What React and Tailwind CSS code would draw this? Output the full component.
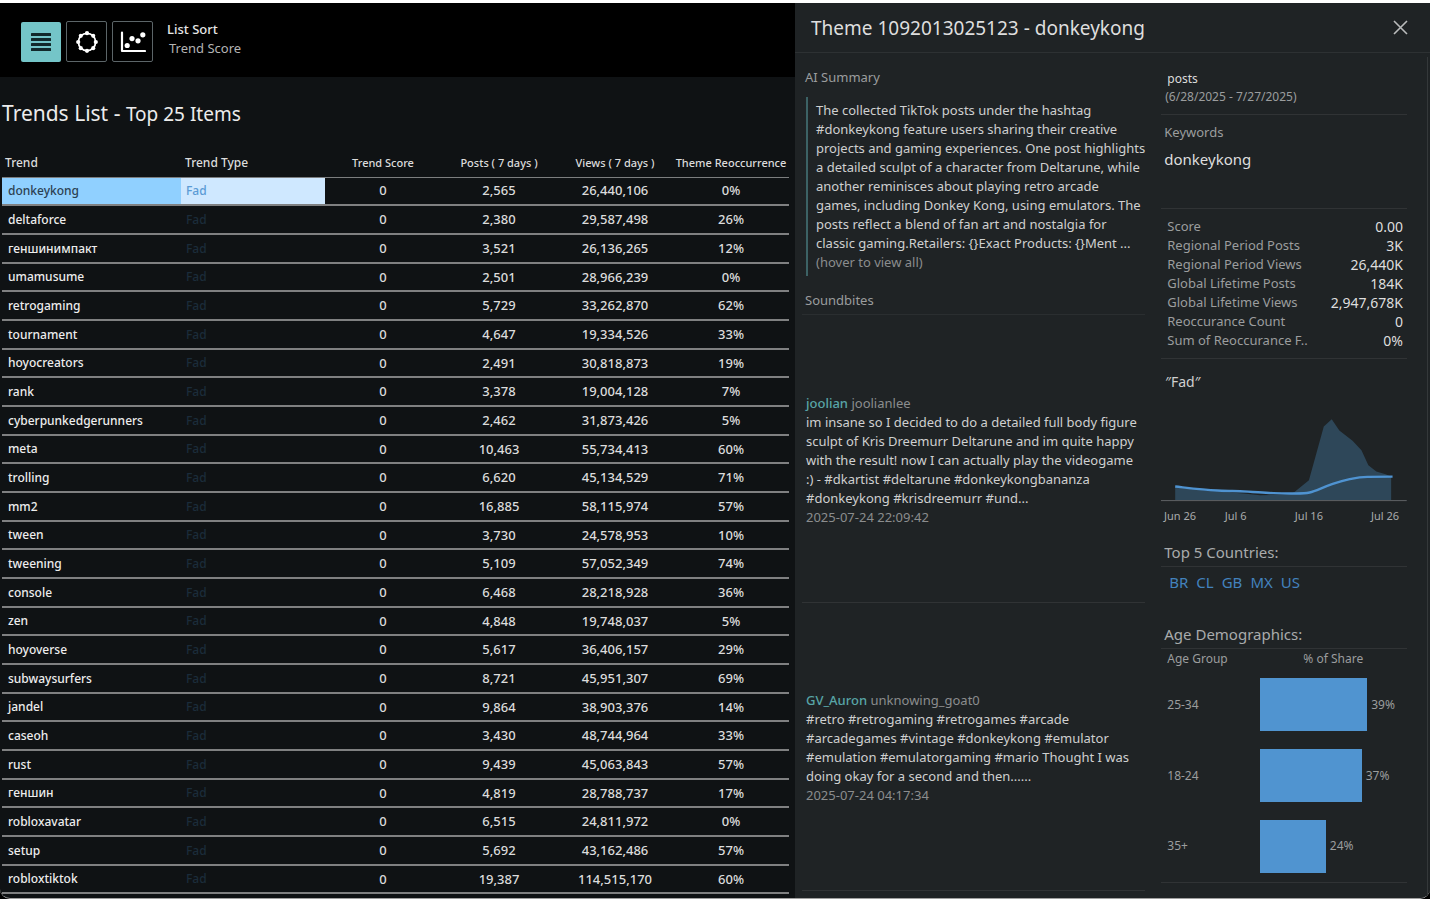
const trends = [
  ["donkeykong", "2,565", "26,440,106", "0%"],
  ["deltaforce", "2,380", "29,587,498", "26%"],
  ["геншинимпакт", "3,521", "26,136,265", "12%"],
  ["umamusume", "2,501", "28,966,239", "0%"],
  ["retrogaming", "5,729", "33,262,870", "62%"],
  ["tournament", "4,647", "19,334,526", "33%"],
  ["hoyocreators", "2,491", "30,818,873", "19%"],
  ["rank", "3,378", "19,004,128", "7%"],
  ["cyberpunkedgerunners", "2,462", "31,873,426", "5%"],
  ["meta", "10,463", "55,734,413", "60%"],
  ["trolling", "6,620", "45,134,529", "71%"],
  ["mm2", "16,885", "58,115,974", "57%"],
  ["tween", "3,730", "24,578,953", "10%"],
  ["tweening", "5,109", "57,052,349", "74%"],
  ["console", "6,468", "28,218,928", "36%"],
  ["zen", "4,848", "19,748,037", "5%"],
  ["hoyoverse", "5,617", "36,406,157", "29%"],
  ["subwaysurfers", "8,721", "45,951,307", "69%"],
  ["jandel", "9,864", "38,903,376", "14%"],
  ["caseoh", "3,430", "48,744,964", "33%"],
  ["rust", "9,439", "45,063,843", "57%"],
  ["геншин", "4,819", "28,788,737", "17%"],
  ["robloxavatar", "6,515", "24,811,972", "0%"],
  ["setup", "5,692", "43,162,486", "57%"],
  ["robloxtiktok", "19,387", "114,515,170", "60%"],
];

const stats = [
  ["Score", "0.00"],
  ["Regional Period Posts", "3K"],
  ["Regional Period Views", "26,440K"],
  ["Global Lifetime Posts", "184K"],
  ["Global Lifetime Views", "2,947,678K"],
  ["Reoccurance Count", "0"],
  ["Sum of Reoccurance F..", "0%"],
];

const posts = [
  {
    name: "joolian",
    handle: "joolianlee",
    lines: [
      "im insane so I decided to do a detailed full body figure",
      "sculpt of Kris Dreemurr Deltarune and im quite happy",
      "with the result! now I can actually play the videogame",
      ":) - #dkartist #deltarune #donkeykongbananza",
      "#donkeykong #krisdreemurr #und...",
    ],
    time: "2025-07-24 22:09:42",
  },
  {
    name: "GV_Auron",
    handle: "unknowing_goat0",
    lines: [
      "#retro #retrogaming #retrogames #arcade",
      "#arcadegames #vintage #donkeykong #emulator",
      "#emulation #emulatorgaming #mario Thought I was",
      "doing okay for a second and then......",
    ],
    time: "2025-07-24 04:17:34",
  },
];

const summary = [
  "The collected TikTok posts under the hashtag",
  "#donkeykong feature users sharing their creative",
  "projects and gaming experiences. One post highlights",
  "a detailed sculpt of a character from Deltarune, while",
  "another reminisces about playing retro arcade",
  "games, including Donkey Kong, using emulators. The",
  "posts reflect a blend of fan art and nostalgia for",
  "classic gaming.Retailers: {}Exact Products: {}Ment ...",
];

const ages = [
  ["25-34", 39],
  ["18-24", 37],
  ["35+", 24],
];

const MAX_BAR = 73;

function ListIcon() {
  return (
    <svg width="20" height="18" viewBox="0 0 20 18" fill="#12292b" aria-hidden="true">
      <rect width="20" height="3" rx="0.5" />
      <rect y="5" width="20" height="3" rx="0.5" />
      <rect y="10" width="20" height="3" rx="0.5" />
      <rect y="15" width="20" height="3" rx="0.5" />
    </svg>
  );
}

function RingIcon() {
  const dots = [[11, 2.2], [17.2, 4.8], [19.8, 11], [17.2, 17.2], [11, 19.8], [4.8, 17.2], [2.2, 11], [4.8, 4.8]];
  return (
    <svg width="22" height="22" viewBox="0 0 22 22" aria-hidden="true">
      <circle cx="11" cy="11" r="8.6" fill="none" stroke="#fff" strokeWidth="1.8" />
      {dots.map(([x, y]) => (
        <circle key={`${x}-${y}`} cx={x} cy={y} r="2.1" fill="#fff" />
      ))}
    </svg>
  );
}

function ScatterIcon() {
  return (
    <svg width="26" height="22" viewBox="0 0 26 22" fill="#fff" aria-hidden="true">
      <path d="M2 1.5V20H25" fill="none" stroke="#fff" strokeWidth="2.2" strokeLinecap="round" strokeLinejoin="round" />
      <circle cx="7.2" cy="14.5" r="2.6" />
      <circle cx="12" cy="7.6" r="2.6" />
      <circle cx="18" cy="9.8" r="2.6" />
      <circle cx="22.8" cy="3.8" r="2.6" />
    </svg>
  );
}

function Toolbar() {
  return (
    <header className="flex h-[74px] items-start bg-black pt-[18px] pl-[21px]">
      <div className="flex items-center gap-[5px]">
        <button type="button" aria-label="List view" className="flex size-10 items-center justify-center rounded-xs bg-[#74c5c8]">
          <ListIcon />
        </button>
        <button type="button" aria-label="Network view" className="flex size-[41px] items-center justify-center rounded-xs border border-[#5c6568]">
          <RingIcon />
        </button>
        <button type="button" aria-label="Scatter view" className="flex size-[41px] items-center justify-center rounded-xs border border-[#5c6568]">
          <ScatterIcon />
        </button>
      </div>
      <div className="-mt-px ml-[14px] text-[13px] leading-[19px]">
        <p className="font-medium text-[#e6e6e6]">List Sort</p>
        <p className="pl-0.5 text-[#b4b4b4]">Trend Score</p>
      </div>
    </header>
  );
}

function TrendsTable() {
  return (
    <table className="mb-1 ml-[2px] w-[calc(100%-8px)] table-fixed border-collapse text-[13px] leading-4 font-medium text-[#dcdcdc]">
      <colgroup>
        <col className="w-[179px]" />
        <col className="w-[144px]" />
        <col />
        <col />
        <col />
        <col />
      </colgroup>
      <thead>
        <tr className="h-[30px] border-b border-[#7c7e7f] text-[11px]">
          <th scope="col" className="pt-0.5 pl-[3px] text-left text-[12px] font-medium">Trend</th>
          <th scope="col" className="pt-0.5 pl-1 text-left text-[12px] font-medium">Trend Type</th>
          <th scope="col" className="pt-0.5 font-medium">Trend Score</th>
          <th scope="col" className="pt-0.5 font-medium">Posts ( 7 days )</th>
          <th scope="col" className="pt-0.5 font-medium">Views ( 7 days )</th>
          <th scope="col" className="pt-0.5 font-medium whitespace-nowrap">Theme Reoccurrence</th>
        </tr>
      </thead>
      <tbody>
        {trends.map(([name, count, views, rate], i) => (
          <tr key={name} className={`border-b-2 border-[#7f8081] text-center ${i % 3 === 0 ? "h-7" : "h-[29px]"}`}>
            <td className={`pl-[6px] text-left text-[12px] ${i === 0 ? "bg-[#90d0ff] text-[#2c4152]" : "text-[#ededed]"}`}>{name}</td>
            <td className={`pl-[5px] text-left text-[12px] ${i === 0 ? "bg-[#cfe8ff] text-[#5b9bd5]" : "text-[#1b2c3a]"}`}>Fad</td>
            <td className="pb-px">0</td>
            <td className="pb-px">{count}</td>
            <td className="pb-px">{views}</td>
            <td className="pb-px">{rate}</td>
          </tr>
        ))}
      </tbody>
    </table>
  );
}

function TrendChart() {
  return (
    <figure className="mt-[14px]">
      <svg viewBox="0 0 248 98" className="block w-full" role="img" aria-label="Post volume over time">
        <path
          d="M14.3 96V83.3L56.7 87.3 83.3 89.3 100 91 130 90.3 135 87.5 149.3 76 156.7 49.3 164.3 21.7 172.3 14.3 180 25.7 193.3 36 202.3 45.7 209.3 60.7 217.3 67 226.7 70 232.3 72.3V96Z"
          fill="#2e4759"
        />
        <path d="M0 96.5H248" stroke="#5f6365" strokeWidth="1" />
        <path
          d="M14.3 82.3C28 83.8 42 85.6 56.7 86.3S68 86.7 80 87 102 88.6 113.3 89 127 89.4 133.3 89.3 144 89.4 150 88.3 162 83.6 173.3 79.7 186 75.8 193.3 74.3 203 72.8 210 72.5L233.7 72.3"
          fill="none"
          stroke="#4f93d1"
          strokeWidth="2.4"
        />
      </svg>
      <figcaption className="mt-[6px] grid grid-cols-[38fr_74fr_74fr_62fr] text-center text-[11px] leading-4 text-[#a9abac]">
        <span>Jun 26</span>
        <span>Jul 6</span>
        <span>Jul 16</span>
        <span className="pr-2 text-right">Jul 26</span>
      </figcaption>
    </figure>
  );
}

function Summary() {
  return (
    <div className="pt-[10px] text-[13px] text-[#cfd0d0]">
      <h3 className="leading-5 text-[#9b9d9e]">AI Summary</h3>
      <div className="mt-[10px] ml-px border-l-2 border-[#3c6265] py-1 pl-2 leading-[19px] whitespace-nowrap">
        {summary.map((line) => (
          <p key={line}>{line}</p>
        ))}
        <p className="text-[#8b8d8e]">(hover to view all)</p>
      </div>
      <h3 className="mt-[14px] leading-5 text-[#9b9d9e]">Soundbites</h3>
      <div className="-ml-[3px] mt-1 border-t border-[#2a2e30]">
        {posts.map((post) => (
          <article key={post.name} className="flex h-[288px] flex-col justify-center border-b border-[#303335] pt-[3px] pl-1 leading-[19px] whitespace-nowrap">
            <p className="text-[#8b8d8e]">
              <a href="#profile" className="font-medium text-[#58a5a7]">{post.name}</a> {post.handle}
            </p>
            {post.lines.map((line) => (
              <p key={line}>{line}</p>
            ))}
            <p className="text-[#8b8d8e]">{post.time}</p>
          </article>
        ))}
      </div>
    </div>
  );
}

function Details() {
  return (
    <div className="pt-[13px] text-[13px] leading-[19px] text-[#9b9d9e]">
      <div className="border-b border-[#303335] pb-2 pl-1 text-[12px] leading-[18px]">
        <p className="pl-0.5 text-[#dcdcdc]">posts</p>
        <p>(6/28/2025 - 7/27/2025)</p>
      </div>
      <div className="h-[94px] border-b border-[#303335] pt-2 pl-[3px]">
        <h3>Keywords</h3>
        <p className="mt-2 text-[15px] text-[#dedede]">donkeykong</p>
      </div>
      <dl className="border-b border-[#303335] py-2 pr-1 pl-[6px]">
        {stats.map(([label, value]) => (
          <div key={label} className="flex justify-between">
            <dt>{label}</dt>
            <dd className="text-[14px] text-[#dedede]">{value}</dd>
          </div>
        ))}
      </dl>
      <p className="mt-[13px] pl-1 text-[14px] text-[#cfd0d0]">″Fad″</p>
      <TrendChart />
      <h3 className="mt-[18px] border-b border-[#303335] pb-1 pl-[3px] text-[15px] leading-5 text-[#a9abac]">Top 5 Countries:</h3>
      <ul className="mt-[5px] flex gap-2 pl-2 text-[15px] leading-5 text-[#4382bd]">
        {["BR", "CL", "GB", "MX", "US"].map((code) => (
          <li key={code}>{code}</li>
        ))}
      </ul>
      <h3 className="mt-8 border-b border-[#303335] pb-1 pl-[3px] text-[15px] leading-5 text-[#a9abac]">Age Demographics:</h3>
      <table className="w-full table-fixed border-b border-[#303335] text-[12px] leading-4">
        <thead>
          <tr className="h-5">
            <th scope="col" className="w-2/5 pl-[6px] text-left font-normal">Age Group</th>
            <th scope="col" className="font-normal">% of Share</th>
          </tr>
        </thead>
        <tbody>
          {ages.map(([group, share]) => (
            <tr key={group} className="h-[71px]">
              <td className="pl-[6px]">{group}</td>
              <td>
                <div className="flex items-center gap-1">
                  <div className="h-[53px] bg-[#5094d0]" style={{ width: `${(share / 39) * MAX_BAR}%` }} />
                  <span>{share}%</span>
                </div>
              </td>
            </tr>
          ))}
        </tbody>
      </table>
    </div>
  );
}

export default function App() {
  return (
    <div className="min-h-screen bg-white pt-[3px] font-['Noto_Sans',sans-serif]">
      <div className="bg-black">
        <div className="grid grid-cols-[795fr_635fr] overflow-hidden rounded-b-[10px] border-b border-[#a0a0a0] bg-[#0f1214]">
          <main className="flex min-w-0 flex-col">
            <Toolbar />
            <h1 className="mt-[22px] mb-[19px] pl-[2px] text-[21px] leading-7 text-[#ececec]">
              Trends List - <span className="text-[19px]">Top 25 Items</span>
            </h1>
            <TrendsTable />
          </main>
          <aside className="flex min-w-0 flex-col bg-[#1f2325]">
            <header className="flex h-[50px] items-center justify-between border-b border-[#2d3133] pr-[22px] pl-4">
              <h2 className="text-[19px] leading-6 text-[#dedede]">Theme 1092013025123 - donkeykong</h2>
              <button type="button" aria-label="Close">
                <svg width="15" height="15" viewBox="0 0 15 15" fill="none" stroke="#b9bbbc" strokeWidth="1.6" aria-hidden="true">
                  <path d="M1 1L14 14M14 1L1 14" />
                </svg>
              </button>
            </header>
            <div className="mt-1 mr-[2px] grid flex-1 grid-cols-[337fr_250fr] gap-4 border-r border-[#34383a] pr-5 pl-[10px]">
              <Summary />
              <Details />
            </div>
          </aside>
        </div>
      </div>
    </div>
  );
}
